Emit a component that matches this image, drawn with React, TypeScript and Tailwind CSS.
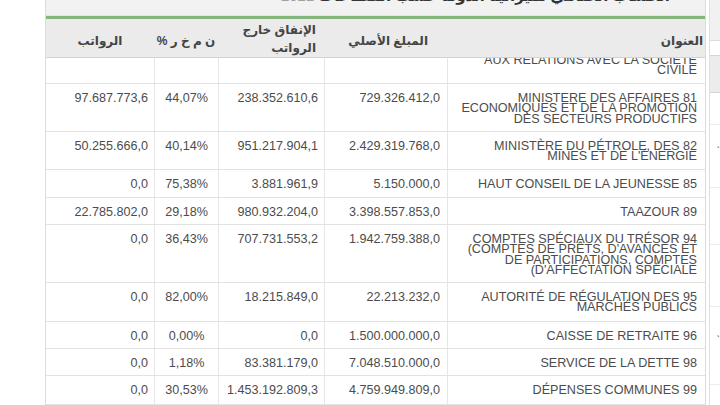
import React from 'react';

type Row = {
  h: string;
  title: string[];
  original: string;
  outside: string;
  pct: string;
  salaries: string;
};

const rows: Row[] = [
  { h: 'h-[38px]', title: ['AUX RELATIONS AVEC LA SOCIETE', 'CIVILE'], original: '', outside: '', pct: '', salaries: '' },
  {
    h: 'h-[48px]',
    title: ['MINISTERE DES AFFAIRES 81', 'ECONOMIQUES ET DE LA PROMOTION', 'DES SECTEURS PRODUCTIFS'],
    original: '729.326.412,0',
    outside: '238.352.610,6',
    pct: '44,07%',
    salaries: '97.687.773,6',
  },
  {
    h: 'h-[38px]',
    title: ['MINISTÈRE DU PÉTROLE, DES 82', "MINES ET DE L'ÉNERGIE"],
    original: '2.429.319.768,0',
    outside: '951.217.904,1',
    pct: '40,14%',
    salaries: '50.255.666,0',
  },
  { h: 'h-[28px]', title: ['HAUT CONSEIL DE LA JEUNESSE 85'], original: '5.150.000,0', outside: '3.881.961,9', pct: '75,38%', salaries: '0,0' },
  { h: 'h-[27px]', title: ['TAAZOUR 89'], original: '3.398.557.853,0', outside: '980.932.204,0', pct: '29,18%', salaries: '22.785.802,0' },
  {
    h: 'h-[58px]',
    title: ['COMPTES SPÉCIAUX DU TRÉSOR 94', "(COMPTES DE PRÊTS, D'AVANCES ET", 'DE PARTICIPATIONS, COMPTES', "(D'AFFECTATION SPÉCIALE"],
    original: '1.942.759.388,0',
    outside: '707.731.553,2',
    pct: '36,43%',
    salaries: '0,0',
  },
  {
    h: 'h-[39px]',
    title: ['AUTORITÉ DE RÉGULATION DES 95', 'MARCHÉS PUBLICS'],
    original: '22.213.232,0',
    outside: '18.215.849,0',
    pct: '82,00%',
    salaries: '0,0',
  },
  { h: 'h-[27px]', title: ['CAISSE DE RETRAITE 96'], original: '1.500.000.000,0', outside: '0,0', pct: '0,00%', salaries: '0,0' },
  { h: 'h-[27px]', title: ['SERVICE DE LA DETTE 98'], original: '7.048.510.000,0', outside: '83.381.179,0', pct: '1,18%', salaries: '0,0' },
  { h: 'h-[29px]', title: ['DÉPENSES COMMUNES 99'], original: '4.759.949.809,0', outside: '1.453.192.809,3', pct: '30,53%', salaries: '0,0' },
];

const cell = 'shrink-0 pt-[9px] leading-[10.4px] whitespace-nowrap';

export default function App() {
  return (
    <div className="w-[720px] h-[405px] overflow-hidden bg-white flex font-['Liberation_Sans','DejaVu_Sans',sans-serif] text-[#4c4c4c]">
      <div className="w-[45px] shrink-0" />

      {/* main panel */}
      <div className="w-[661px] shrink-0 flex flex-col border-l border-r border-[#dcdcdc]">
        <div className="h-[15px] bg-[#f2f2f2] overflow-hidden">
          <div className="-mt-[14px] pr-[35px] text-right text-[15px] leading-[20px] font-bold text-[#333] whitespace-nowrap">
            <span dir="rtl">
              الحساب الختامي لميزانية الدولة حسب القطاعات <span className="text-[#a0a0a0] font-normal">2022</span>
            </span>
          </div>
        </div>
        <div className="h-[1px] bg-[#dfe9dc]" />
        <div className="h-[3px] bg-[#84b67c]" />

        <table className="table-fixed w-[659px] border-collapse bg-[#ebebeb] border-b border-[#d2d2d2] font-bold text-[12px] text-[#444]">
          <colgroup>
            <col className="w-[108px]" />
            <col className="w-[64px]" />
            <col className="w-[106px]" />
            <col className="w-[123px]" />
            <col className="w-[258px]" />
          </colgroup>
          <thead>
            <tr className="h-[38px]">
              <th className="align-middle text-center pt-[6px] leading-[18px] font-bold">الرواتب</th>
              <th className="align-middle text-center pt-[6px] leading-[18px] font-bold" dir="rtl">ن م خ ر %</th>
              <th className="align-middle text-right pt-[2px] pr-[8px] leading-[18px] font-bold" dir="rtl">
                الإنفاق خارج
                <br />
                الرواتب
              </th>
              <th className="align-middle text-right pt-[6px] pr-[19px] leading-[18px] font-bold" dir="rtl">المبلغ الأصلي</th>
              <th className="align-middle text-right pt-[6px] pr-[2px] leading-[18px] font-bold" dir="rtl">العنوان</th>
            </tr>
          </thead>
        </table>

        {/* body, scrolled so the first row is partly hidden under the header */}
        <div className="flex-1 overflow-hidden">
          <div className="-mt-[12px] flex flex-col text-[12.6px]">
            {rows.map((r, i) => (
              <div key={i} className={`${r.h} shrink-0 flex border-b border-[#e2e2e2]`}>
                <div className={`${cell} w-[108px] text-right pr-[6px]`}>{r.salaries}</div>
                <div className={`${cell} w-[64px] text-center border-l border-[#e6e6e6]`}>{r.pct}</div>
                <div className={`${cell} w-[106px] text-right pr-[6px] border-l border-[#e6e6e6]`}>{r.outside}</div>
                <div className={`${cell} w-[123px] text-right pr-[7px] border-l border-[#e6e6e6]`}>{r.original}</div>
                <div className={`${cell} w-[258px] text-right pr-[8px] border-l border-[#e6e6e6]`}>
                  {r.title.map((t, j) => (
                    <div key={j}>{t}</div>
                  ))}
                </div>
              </div>
            ))}
          </div>
        </div>
      </div>

      {/* neighbouring panel, cut off at the right edge */}
      <div className="flex-1 flex pl-[3px]">
        <div className="flex-1 flex flex-col border-l border-[#e0e0e0]">
          <div className="h-[41px] bg-[#f1f1f1] border-b border-[#dcdcdc]" />
          <div className="h-[14px]" />
          <div className="h-[38px] bg-[#ececec] border-y border-[#d6d6d6]" />
          <div className="h-[32px] border-b border-[#ececec]" />
          <div className="h-[63px] border-b border-[#ececec] flex justify-end pt-[13px]">
            <span className="text-[10px] leading-[10px] text-[#333]">ˎ</span>
          </div>
          <div className="h-[57px] border-b border-[#ececec]" />
          <div className="h-[62px] border-b border-[#ececec]" />
          <div className="h-[78px] border-b border-[#ececec] flex justify-end pt-[20px]">
            <span className="text-[10px] leading-[10px] text-[#333]">ˎ</span>
          </div>
          <div className="flex-1" />
        </div>
      </div>
    </div>
  );
}
